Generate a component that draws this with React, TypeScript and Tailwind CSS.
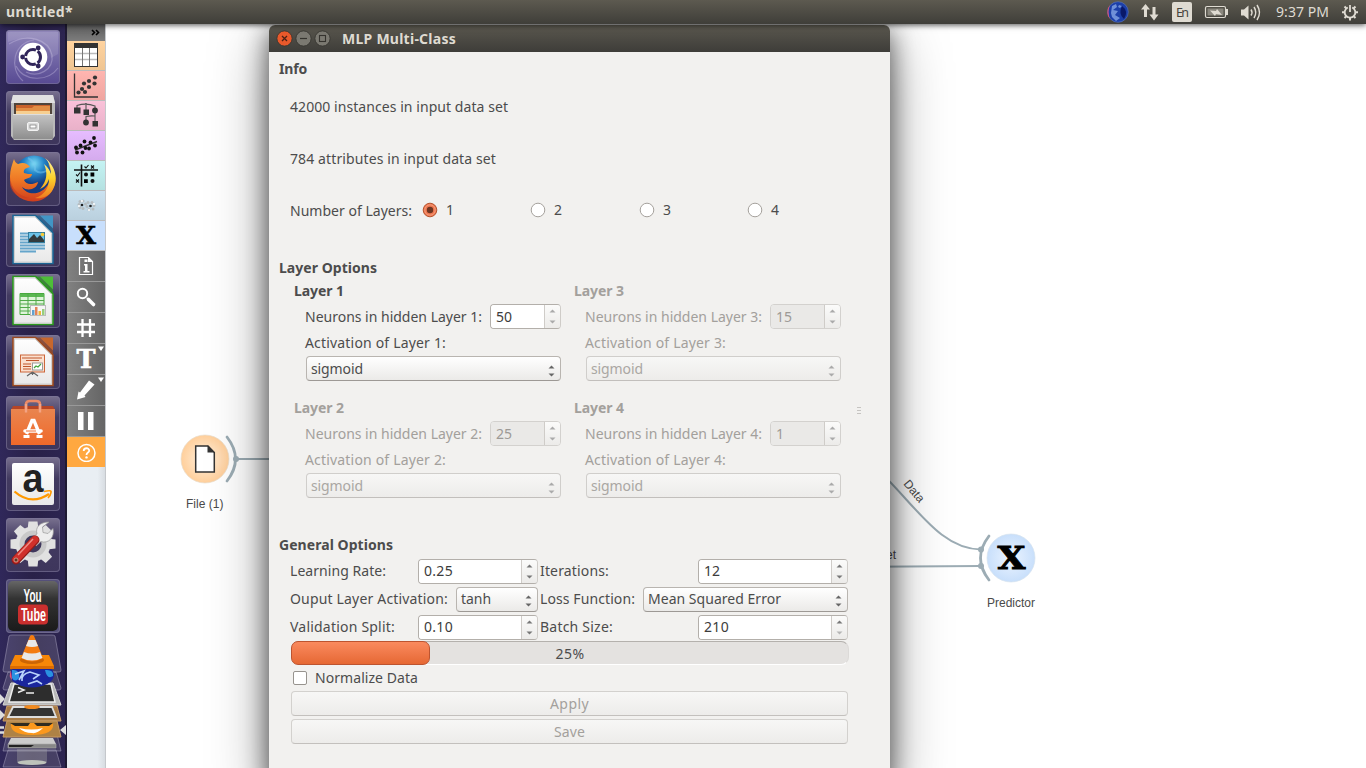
import { useLayoutEffect, useRef, useState } from "react";
import type { ReactNode } from "react";

/* Text set to a given measure by adjusting its tracking. */
function T({ w, children, className = "" }: { w: number; children: string; className?: string }) {
  const ref = useRef<HTMLSpanElement>(null);
  const [gap, setGap] = useState(0);
  useLayoutEffect(() => {
    const el = ref.current;
    if (!el) return;
    const prev = el.style.letterSpacing;
    el.style.letterSpacing = "0px";
    const natural = el.getBoundingClientRect().width;
    el.style.letterSpacing = prev;
    setGap((w - natural) / children.length);
  }, [w, children]);
  return (
    <span ref={ref} style={{ letterSpacing: `${gap}px` }} className={`inline-block shrink-0 whitespace-pre ${className}`}>
      {children}
    </span>
  );
}

/* ---------- form controls ---------- */

function Arrows({ up, down, gap }: { up: string; down: string; gap: number }) {
  return (
    <svg width="7" height={8 + gap} viewBox={`0 0 7 ${8 + gap}`}>
      <path d="M0.5 3.5L3.5 0.5L6.5 3.5Z" fill={up} />
      <path d={`M0.5 ${gap + 4.5}L3.5 ${gap + 7.5}L6.5 ${gap + 4.5}Z`} fill={down} />
    </svg>
  );
}

function Spin({ value, tw, disabled, up = "#777", down = "#777", className }: { value: string; tw: number; disabled?: boolean; up?: string; down?: string; className: string }) {
  return (
    <div className={`flex h-[25px] shrink-0 overflow-hidden rounded-[4px] border ${disabled ? "border-[#d3d1ce] text-[#9d9a96]" : "border-[#b3afaa] border-r-[#cfccc8] text-[#3c3c3c]"} ${className}`}>
      <div className={`flex flex-1 items-center pl-[5px] ${disabled ? "bg-[#eae9e7]" : "bg-white"}`}>
        <T w={tw}>{value}</T>
      </div>
      <div className="flex w-[16px] items-center justify-center border-l border-[#cfccc8] bg-linear-to-b from-[#fbfbfa] to-[#ecebe9]">
        <Arrows up={disabled ? "#aaa" : up} down={disabled ? "#aaa" : down} gap={7} />
      </div>
    </div>
  );
}

function Combo({ value, tw, disabled, className }: { value: string; tw: number; disabled?: boolean; className: string }) {
  return (
    <div className={`flex h-[25px] shrink-0 items-center justify-between rounded-[4px] border bg-linear-to-b pr-[5px] pl-[4px] ${disabled ? "border-[#d0cecb] border-b-[#c2bfbc] from-[#f7f7f6] to-[#edecea] text-[#aaa7a3]" : "border-[#b9b5b0] border-b-[#9d9995] from-white to-[#ebeae8] text-[#4c4c4c]"} ${className}`}>
      <T w={tw}>{value}</T>
      <div className="pt-[4px]">
        <Arrows up={disabled ? "#aaa" : "#666"} down={disabled ? "#aaa" : "#666"} gap={4} />
      </div>
    </div>
  );
}

function Layer({ n, value, tw, disabled }: { n: number; value: string; tw: number; disabled?: boolean }) {
  return (
    <div className={`flex w-[267px] flex-col ${disabled ? "text-[#a3a09c]" : "text-[#4c4c4c]"}`}>
      <div className="flex h-[22px] items-center font-bold">
        <T w={50}>{`Layer ${n}`}</T>
      </div>
      <div className="mt-[2px] flex h-[26px] items-start justify-between pl-[11px]">
        <div className="flex h-[26px] items-center">
          <T w={177}>{`Neurons in hidden Layer ${n}:`}</T>
        </div>
        <Spin className="w-[71px]" value={value} tw={tw} disabled={disabled} up="#aaa" down="#aaa" />
      </div>
      <div className="flex h-[26px] items-center pl-[11px]">
        <T w={141}>{`Activation of Layer ${n}:`}</T>
      </div>
      <Combo className="ml-[12px] w-[255px]" value="sigmoid" tw={52} disabled={disabled} />
    </div>
  );
}

function Radio({ label, on, className = "" }: { label: string; on?: boolean; className?: string }) {
  return (
    <div className={`flex items-center gap-[8px] ${className}`}>
      <svg width="16" height="16" viewBox="0 0 16 16">
        <circle cx="8" cy="8" r="6.800" fill={on ? "#ee7750" : "#fff"} stroke={on ? "#b4542f" : "#a5a19c"} />
        {on && <circle cx="8" cy="8" r="5.2" fill="none" stroke="#f59a78" />}
        {on && <circle cx="8" cy="8" r="3.2" fill="#6d3521" />}
      </svg>
      <T w={8}>{label}</T>
    </div>
  );
}

function PushButton({ label, tw }: { label: string; tw: number }) {
  return (
    <div className="flex h-[25px] w-[557px] items-center justify-center rounded-[4px] border border-[#d3d1ce] border-b-[#c3c0bd] bg-linear-to-b from-[#f7f7f6] to-[#edecea] text-[#a3a09c]">
      <T w={tw}>{label}</T>
    </div>
  );
}

/* ---------- dialog ---------- */

function Dialog() {
  return (
    <div className="absolute top-[25px] left-[269px] flex h-[760px] w-[621px] flex-col rounded-t-[6px] bg-[#f2f1ef] text-[#4c4c4c] shadow-[0_16px_60px_rgba(0,0,0,0.4),0_6px_26px_rgba(0,0,0,0.6)]">
      <div className="flex h-[27px] items-center rounded-t-[6px] bg-linear-to-b from-[#5b584f] to-[#3e3d39] pl-[7px]">
        <svg width="56" height="18" viewBox="0 0 56 18">
          <circle cx="8.5" cy="8.500" r="7.6" fill="#e9592b" stroke="#35332e" strokeWidth=".8" />
          <path d="M6 6l5 5M11 6l-5 5" stroke="#4b2114" strokeWidth="1.3" />
          <circle cx="27.5" cy="8.500" r="7.6" fill="#7b7971" stroke="#35332e" strokeWidth=".8" />
          <path d="M24 8.500h7" stroke="#35332e" strokeWidth="1.2" />
          <circle cx="46.5" cy="8.500" r="7.6" fill="#7b7971" stroke="#35332e" strokeWidth=".8" />
          <rect x="43.500" y="5.500" width="6" height="6" fill="none" stroke="#35332e" strokeWidth="1.1" />
        </svg>
        <T w={114} className="ml-[10px] font-bold text-[#dfdbd2]">MLP Multi-Class</T>
      </div>
      <div className="flex flex-col pt-[5px] pl-[10px]">
        <div className="flex h-[24px] items-center font-bold"><T w={28}>Info</T></div>
        <div className="mt-[14px] flex h-[24px] items-center pl-[11px]"><T w={218}>42000 instances in input data set</T></div>
        <div className="mt-[28px] flex h-[24px] items-center pl-[11px]"><T w={206}>784 attributes in input data set</T></div>
        <div className="mt-[27px] flex h-[24px] items-center pl-[11px]">
          <T w={122} className="relative top-px">Number of Layers:</T>
          <Radio label="1" on className="ml-[10px] w-[108px]" />
          <Radio label="2" className="w-[109px]" />
          <Radio label="3" className="w-[108px]" />
          <Radio label="4" />
        </div>
        <div className="mt-[34px] flex h-[24px] items-center font-bold"><T w={98}>Layer Options</T></div>
        <div className="flex items-center">
          <div className="grid w-[560px] grid-cols-[280px_267px] gap-y-[16px] pl-[15px]">
            <Layer n={1} value="50" tw={16} />
            <Layer n={3} value="15" tw={16} disabled />
            <Layer n={2} value="25" tw={16} disabled />
            <Layer n={4} value="1" tw={8} disabled />
          </div>
          <div className="mt-[43px] ml-[18px] flex flex-col gap-[2px]">
            <div className="h-px w-[4px] bg-[#c6c4c1]" />
            <div className="h-px w-[4px] bg-[#c6c4c1]" />
            <div className="h-px w-[4px] bg-[#c6c4c1]" />
          </div>
        </div>
        <div className="mt-[35px] flex h-[24px] items-center font-bold"><T w={114}>General Options</T></div>
        <div className="flex h-[28px] items-center pl-[11px]">
          <div className="w-[128px]"><T w={96}>Learning Rate:</T></div>
          <Spin className="w-[120px]" value="0.25" tw={29} />
          <div className="ml-[2px] w-[158px]"><T w={69}>Iterations:</T></div>
          <Spin className="w-[150px]" value="12" tw={16} />
        </div>
        <div className="flex h-[28px] items-center pl-[11px]">
          <div className="w-[166px]"><T w={158}>Ouput Layer Activation:</T></div>
          <Combo className="w-[82px]" value="tanh" tw={30} />
          <div className="ml-[2px] w-[103px]"><T w={95}>Loss Function:</T></div>
          <Combo className="w-[205px]" value="Mean Squared Error" tw={133} />
        </div>
        <div className="flex h-[28px] items-center pl-[11px]">
          <div className="w-[128px]"><T w={105}>Validation Split:</T></div>
          <Spin className="w-[120px]" value="0.10" tw={29} />
          <div className="ml-[2px] w-[158px]"><T w={73}>Batch Size:</T></div>
          <Spin className="w-[150px]" value="210" tw={25} down="#b5b5b5" />
        </div>
        <div className="relative ml-[12px] flex h-[24px] w-[558px] items-center justify-center rounded-[8px] border border-[#dcdad8] border-t-[#b4b1ad] border-b-white bg-[#e4e2e0] pt-[2px]">
          <div className="absolute -top-px -left-px h-[24px] w-[139px] rounded-[7px] border border-[#bd5430] bg-linear-to-b from-[#fa8a5e] to-[#e66833]" />
          <T w={29}>25%</T>
        </div>
        <div className="flex h-[26px] items-center pl-[14px]">
          <div className="h-[14px] w-[14px] rounded-[2px] border border-[#97938e] bg-white" />
          <T w={103} className="ml-[8px]">Normalize Data</T>
        </div>
        <div className="flex flex-col gap-[3px] pl-[12px]">
          <PushButton label="Apply" tw={39} />
          <PushButton label="Save" tw={31} />
        </div>
      </div>
    </div>
  );
}

/* ---------- canvas ---------- */

function Canvas() {
  return (
    <div className="relative flex-1 overflow-hidden bg-white">
      <svg className="absolute inset-0" width="1260" height="744" viewBox="106 24 1260 744">
        <defs>
          <radialGradient id="file"><stop offset="0" stopColor="#fff1e0" /><stop offset="1" stopColor="#ffcf9b" /></radialGradient>
          <radialGradient id="pred"><stop offset="0" stopColor="#ecf4ff" /><stop offset="1" stopColor="#c8dffb" /></radialGradient>
        </defs>
        <g fill="none" stroke="#9cacb4" strokeWidth="2">
          <path d="M236 459H300" />
          <path d="M870 462C915 503 938 549 981 549.500" />
          <path d="M870 566.800L981 566" />
          <path d="M227 437Q244 459 227 481" strokeWidth="2.800" strokeLinecap="round" />
          <path d="M989 536Q972 558 989 580" strokeWidth="2.800" strokeLinecap="round" />
        </g>
        <circle cx="236" cy="459" r="3" fill="#9cacb4" />
        <circle cx="981" cy="549.500" r="3" fill="#9cacb4" />
        <circle cx="981" cy="566" r="3" fill="#9cacb4" />
        <circle cx="205" cy="459" r="24" fill="url(#file)" stroke="#e8dccd" strokeWidth=".7" />
        <path d="M195.700 446H208L214.300 452.500V472H195.700Z" fill="#fff" stroke="#333" strokeWidth="1.500" />
        <path d="M207.500 445.500V452.500H215Z" fill="#333" />
        <circle cx="1011" cy="558" r="24" fill="url(#pred)" stroke="#d6e2ee" strokeWidth=".7" />
        <text x="1011.500" y="568.700" textAnchor="middle" fontFamily="DejaVu Serif" fontWeight="bold" fontSize="32" stroke="#000" strokeWidth=".9" textLength="28" lengthAdjust="spacingAndGlyphs">X</text>
        <g fontFamily="Liberation Sans" fontSize="12" fill="#4a4a4a">
          <text x="186" y="508" textLength="37.500">File (1)</text>
          <text x="987" y="607" textLength="48">Predictor</text>
          <text x="886" y="559">et</text>
          <text transform="translate(903 484) rotate(50)">Data</text>
        </g>
      </svg>
    </div>
  );
}

/* ---------- widget toolbar ---------- */

function Tool({ bg, children }: { bg: string; children: ReactNode }) {
  return (
    <div className={`flex h-[30px] items-center justify-center border-b border-[#bbb] ${bg}`}>
      <svg width="28" height="28" viewBox="0 0 28 28">{children}</svg>
    </div>
  );
}

function DarkTool({ children, menu }: { children: ReactNode; menu?: boolean }) {
  return (
    <div className="flex h-[31px] items-center justify-center border-b border-[#999] bg-linear-to-r from-[#818181] to-[#656565]">
      <svg width="38" height="30" viewBox="0 0 38 30">
        {children}
        {menu && <path d="M31 2.500h6l-3 4.500z" fill="#fff" />}
      </svg>
    </div>
  );
}

function dots(points: number[][], r: number, fill = "#333") {
  return points.map(([x, y]) => <circle key={`${x}-${y}`} cx={x} cy={y} r={r} fill={fill} />);
}

function Toolbar() {
  return (
    <div className="flex w-[39px] flex-col border-r border-[#c5c8cc] bg-linear-to-r from-[#e9eef3] from-80% to-[#d8dde2]">
      <div className="flex h-[17px] items-center justify-end bg-linear-to-b from-[#5c5c5c] to-[#7d7d7d] pr-[5px]">
        <svg width="9" height="7" viewBox="0 0 9 7"><path d="M1 1l2.500 2.500L1 6M5 1l2.500 2.500L5 6" fill="none" stroke="#000" strokeWidth="1.600" /></svg>
      </div>
      <Tool bg="bg-linear-to-b from-[#ffd39f] to-[#efc592]">
        <rect x="2.500" y="1.500" width="23" height="23" fill="#fff" stroke="#333" />
        <rect x="2" y="1" width="24" height="5" fill="#333" />
        <path d="M3 11.500h22M3 17.500h22" stroke="#bbb" strokeWidth="1.500" /><path d="M10.500 6v18M17.500 6v18" stroke="#777" />
      </Tool>
      <Tool bg="bg-linear-to-b from-[#ffb5b0] to-[#efa5a0]">
        <path d="M2.500 1.500V25H26" fill="none" stroke="#333" strokeWidth="1.300" />
        {dots([[6.500, 20.500], [10, 17], [13, 20], [12, 11.500], [17, 15], [17, 9], [22.500, 11.500], [23, 5.500]], 2.100)}
      </Tool>
      <Tool bg="bg-linear-to-b from-[#fac1d9] to-[#e9b1c9]">
        <path d="M5 8V3.500Q14 0.500 23 4V8M14 1V8M14 19V14.500Q18 13.500 23 14M23 10v10" fill="none" stroke="#555" strokeWidth="1.100" />
        <path d="M2 5.500h6.500v6H2zM11.500 7.500h5.500v5.500h-5.500zM20.500 19h5.500v5.500h-5.500z" fill="#333" />
        {dots([[23, 8.500], [14, 20.500]], 2.900)}
      </Tool>
      <Tool bg="bg-linear-to-b from-[#e6bcff] to-[#d5abee]">
        <path d="M3 18L25 9.500" stroke="#333" strokeWidth="1.600" />
        {dots([[4, 15.500], [5, 20.500], [8.500, 13.500], [10.500, 20.500], [12.500, 9.500], [13.500, 16], [17, 16.500], [18.500, 10.500], [22, 6], [23, 13.500]], 1.900, "#111")}
      </Tool>
      <Tool bg="bg-linear-to-b from-[#c4f3f3] to-[#b5e1e1]">
        <path d="M2 8h24M9.500 2.500v22" stroke="#111" strokeWidth="1.600" />
        <path d="M12.500 4.500l1.500 1.500L16.500 3M4 12.500l1.500 1.500L8 10.500M19 3.500l3 3m0-3l-3 3M4 17.500l3 3m0-3l-3 3" fill="none" stroke="#111" strokeWidth="1.100" />
        {dots([[14, 12.500], [20.500, 19]], 2, "#111")}
        <path d="M18.500 10.600h3.800v3.800h-3.800zM12 17.200h3.800V21H12z" />
      </Tool>
      <Tool bg="bg-linear-to-b from-[#cbe2f0] to-[#bad0de]">
        {dots([[8, 9.500], [11, 9], [7, 12.500], [8, 15.500], [11, 16.500], [13.500, 12], [16, 10.500], [20, 10.500], [22, 13.500], [21, 17], [17, 17.500], [15, 14.500]], 1.500, "#b5bcc0")}
        {dots([[10, 13], [18.500, 14]], 1.300, "#222")}
        {dots([[10, 9], [7, 14], [17, 18], [22, 12]], 1, "#fff")}
      </Tool>
      <Tool bg="bg-[#c8dffc]">
        <text x="14" y="22" textAnchor="middle" fontFamily="DejaVu Serif" fontWeight="bold" fontSize="24" stroke="#000" strokeWidth=".6" textLength="20" lengthAdjust="spacingAndGlyphs">X</text>
      </Tool>
      <DarkTool>
        <path d="M12.500 6.500h9l4 4v13h-13z" fill="none" stroke="#fff" strokeWidth="1.200" /><path d="M21 6v5h5z" fill="#fff" />
        <path d="M17 13h3.500v7h2v1.500h-6v-1.500h1.500v-5.500H17zM17.500 8.500h3v2.500h-3z" fill="#fff" />
      </DarkTool>
      <DarkTool>
        <circle cx="15.500" cy="11.500" r="4.700" fill="none" stroke="#fff" strokeWidth="2" /><path d="M20 16l1.500 1.500" stroke="#fff" strokeWidth="1.500" /><path d="M21.500 17.500l5 5" stroke="#fff" strokeWidth="3.600" strokeLinecap="round" />
      </DarkTool>
      <DarkTool>
        <path d="M15.500 6v18M23 6v18M10 11.500h18M10 19h18" stroke="#fff" strokeWidth="2.300" />
      </DarkTool>
      <DarkTool menu>
        <text x="19" y="24.300" textAnchor="middle" fill="#fff" fontFamily="DejaVu Serif" fontWeight="bold" fontSize="25.500" stroke="#fff" strokeWidth=".6" textLength="19" lengthAdjust="spacingAndGlyphs">T</text>
      </DarkTool>
      <DarkTool menu>
        <path d="M22 5.500l5.500 4L17.500 20.500l1 1.500-8.500 2.500 1.500-8 1.500 1z" fill="#fff" />
      </DarkTool>
      <DarkTool>
        <path d="M11 6h5.500v18H11zM21 6h5.500v18H21z" fill="#fff" />
      </DarkTool>
      <div className="flex h-[30px] items-center justify-center bg-[#ffa840]">
        <svg width="20" height="20" viewBox="0 0 20 20">
          <circle cx="10.500" cy="11" r="8.500" fill="none" stroke="#fff" strokeWidth="1.500" />
          <path d="M7.700 9C7.700 5.400 13.300 5.400 13.200 8.700C13.200 10.700 10.500 10.400 10.500 12.900" fill="none" stroke="#fff" strokeWidth="1.800" />
          <circle cx="10.500" cy="15.400" r="1.200" fill="#fff" />
        </svg>
      </div>
    </div>
  );
}

/* ---------- launcher ---------- */

function Tile({ children, bg = "bg-linear-to-b from-[#79718f] via-[#423a60] via-40% to-[#3e365c]" }: { children: ReactNode; bg?: string }) {
  return (
    <div className={`h-[54px] w-[54px] shrink-0 rounded-[4px] ring-1 ring-[#7d769a]/60 ring-inset ${bg}`}>
      <svg className="overflow-visible" width="54" height="54" viewBox="0 0 54 54">{children}</svg>
    </div>
  );
}

function OfficeDoc({ edge, fold, children }: { edge: string; fold: string; children: ReactNode }) {
  return (
    <Tile>
      <path d="M7 2.500H29.500L47 20V50.500H7Z" fill="url(#paper)" stroke={edge} strokeWidth="1.600" />
      <path d="M8.500 4H29L45.500 20.500V49H8.500Z" fill="none" stroke="#cfcfcf" />
      <path d="M29.500 2.500L47 20V15.500L34 2.500Z" fill={edge} opacity=".7" />
      <path d="M34 2.500H47V15.500Z" fill={fold} />
      {children}
    </Tile>
  );
}

const TEETH = [0, 45, 90, 135, 180, 225, 270, 315];

function Launcher() {
  return (
    <div className="flex w-[67px] flex-col items-center gap-[7px] border-r-2 border-[#1f1a33] bg-linear-to-r from-[#30285a] via-[#292148] to-[#2d2551] pt-[6px]">
      <svg className="absolute" width="0" height="0">
        <defs>
          <linearGradient id="paper" x1="0" y1="0" x2="0" y2="1"><stop offset="0" stopColor="#fff" /><stop offset="1" stopColor="#e8e8e8" /></linearGradient>
          <linearGradient id="metal" x1="0" y1="0" x2="0" y2="1"><stop offset="0" stopColor="#c4c4c4" /><stop offset="1" stopColor="#8e8e8e" /></linearGradient>
          <linearGradient id="bag" x1="0" y1="0" x2="0" y2="1"><stop offset="0" stopColor="#e9854f" /><stop offset="1" stopColor="#f0692a" /></linearGradient>
          <radialGradient id="globe" cx=".5" cy=".2"><stop offset="0" stopColor="#7ddcf5" /><stop offset=".5" stopColor="#2384c8" /><stop offset="1" stopColor="#143b80" /></radialGradient>
          <linearGradient id="fox" x1="0" y1="0" x2="0" y2="1"><stop offset="0" stopColor="#f7a33a" /><stop offset=".5" stopColor="#ee7624" /><stop offset="1" stopColor="#cf3d1d" /></linearGradient>
          <linearGradient id="tail" x1="0" y1="0" x2="0" y2="1"><stop offset="0" stopColor="#fff2a0" /><stop offset=".5" stopColor="#fcd12b" /><stop offset="1" stopColor="#ef7a20" /></linearGradient>
          <linearGradient id="yt" x1="0" y1="0" x2="0" y2="1"><stop offset="0" stopColor="#666" /><stop offset=".35" stopColor="#333" /><stop offset="1" stopColor="#1b1b1b" /></linearGradient>
        </defs>
      </svg>
      <Tile bg="bg-linear-to-b from-[#9288bb] to-[#584a93]">
        <g fill="none" stroke="#c5bce2" strokeOpacity=".4" strokeWidth="1.200">
          <path d="M3 14C22 2 43 10 46 25C48 40 32 48 20 42" /><path d="M17 51C2 38 8 12 28 10" /><path d="M52 38C42 52 18 52 10 36" />
        </g>
        <path d="M2 12C24 4 44 12 45 28L52 24V2H2Z" fill="#fff" opacity=".12" />
        <circle cx="27" cy="27" r="14.300" fill="#fff" />
        <circle cx="27" cy="27" r="7.500" fill="none" stroke="#30255a" strokeWidth="3" strokeDasharray="13.700 2" strokeDashoffset="-8.800" />
        {dots([[16.600, 27], [32.200, 18], [32.200, 36]], 2.400, "#30255a")}
      </Tile>
      <Tile>
        <path d="M7 4H47L49 12V45L46 49H8L5 45V12Z" fill="#b9b9b9" />
        <path d="M7 4H47L49 12H5Z" fill="#e2e2e2" />
        <path d="M8 12H46V24H8Z" fill="#50453c" />
        <path d="M10 14H44V24H10Z" fill="#c9622b" /><path d="M10 17H26L28 15H44V24H10Z" fill="#e28e45" /><path d="M10 20H44V24H10Z" fill="#f6cf91" />
        <path d="M7 23H47V48H7Z" fill="url(#metal)" /><path d="M7 23.500H47" stroke="#dedede" />
        <rect x="21.500" y="31.500" width="11" height="8" rx="1.500" fill="#ddd" stroke="#f3f3f3" /><rect x="24" y="34" width="6" height="3" fill="#fff" stroke="#777" strokeWidth=".7" />
      </Tile>
      <Tile>
        <circle cx="28" cy="24" r="20.500" fill="url(#globe)" />
        <path d="M22 6Q30 10 29 18Q34 23 42 18" fill="none" stroke="#75c6ee" strokeWidth="2" opacity=".5" />
        <path d="M8 7C9 10 10 11 12 12C17 10 21 11 24 15C19 16 17 18 18 21C21 22 23 22 26 22C26 26 21 26 18 28C20 33 26 33 32 30C31 37 22 40 16 35C21 44 36 44 43 31C46 26 46 18 42 12C49 17 52 28 47 37C42 47 32 51 22 49C9 46 3 35 4 24C4 18 6 13 8 7Z" fill="url(#fox)" />
        <path d="M39 6C50 14 53 29 46 39C42 45 35 47 29 46C39 43 43 35 43 27C41 33 37 36 34 37C41 29 42 21 38 12C42 15 44 19 45 22C45 16 43 10 39 6Z" fill="url(#tail)" />
        <path d="M4 25C5 37 13 44 23 46C14 47 6 42 4 34Z" fill="#c53a1f" opacity=".5" />
      </Tile>
      <OfficeDoc edge="#1c6694" fold="#4195c5">
        <path d="M14 20.500H39M14 23.500H39M14 26.500H39M14 29.500H39M14 32.500H39M14 35.500H39M14 38.500H30" stroke="#65a5cb" strokeWidth="1.900" />
        <rect x="22.500" y="19.500" width="16" height="10" fill="#6cc3e9" stroke="#347d9d" />
        <path d="M23 29V26L28 21L31 25L34 22L38 27V29Z" fill="#333b3d" /><circle cx="36.500" cy="21.500" r="1.800" fill="#f8c932" />
      </OfficeDoc>
      <OfficeDoc edge="#2c991e" fold="#4dbe37">
        <path d="M14 19.500H38V40.500H14Z" fill="#dff4da" stroke="#48a83e" />
        <path d="M14 20H38V23H14Z" fill="#5ab751" />
        <path d="M14 26.500H38M14 30H38M14 33.500H38M14 37H38M22 20V40M30 20V40" stroke="#51a94a" strokeWidth="1" />
        <rect x="24.500" y="31.500" width="15" height="10" fill="#f6f6f6" stroke="#bbb" />
        <path d="M26 36h2.500v5H26z" fill="#62a1cf" /><path d="M29 33h2.500v8H29z" fill="#e28358" /><path d="M32.500 37h2.500v4h-2.500z" fill="#edb83d" /><path d="M36 35h2.500v6H36z" fill="#97ce7d" />
      </OfficeDoc>
      <OfficeDoc edge="#9c4a20" fold="#c6672d">
        <rect x="14.500" y="20" width="24" height="17" fill="#fbe0cf" stroke="#cc673b" />
        <path d="M16 23H36M20 25.500H33M17 29H25M17 31.500H25M17 34H25" stroke="#bf562c" strokeWidth="1.200" />
        <rect x="26.500" y="28" width="10" height="7" fill="#fff" stroke="#999" /><path d="M28 33l2-2 2 1 3-3" fill="none" stroke="#41a53b" strokeWidth="1.200" />
        <path d="M26.500 37L21 41M26.500 37L32 41M26.500 37V40" stroke="#666" strokeWidth="1.200" />
      </OfficeDoc>
      <Tile>
        <path d="M7 10H47L49 14H5Z" fill="#b54526" />
        <path d="M20 17V8Q20 5 24 5H30Q34 5 34 8V17" fill="none" stroke="#ec8a65" strokeWidth="2.600" />
        <path d="M5 13H49V49H5Z" fill="url(#bag)" />
        <path d="M20 16.500V8M34 16.500V8" stroke="#f4a383" strokeWidth="2.400" />
        <path d="M20.500 38L26 24.500H28L33.500 38" fill="none" stroke="#fff" strokeWidth="3.400" /><path d="M19 35H35" stroke="#fff" strokeWidth="3.600" strokeLinecap="round" /><path d="M20 35H30" stroke="#ee6d32" strokeWidth="1" /><path d="M17.500 40.500h6M30.500 40.500h6" stroke="#fff" strokeWidth="3" />
      </Tile>
      <Tile>
        <rect x="6" y="6" width="42" height="42" rx="2" fill="url(#paper)" />
        <text x="27" y="34.500" textAnchor="middle" fontFamily="Liberation Sans" fontWeight="bold" fontSize="40" fill="#222" textLength="21" lengthAdjust="spacingAndGlyphs">a</text>
        <path d="M8.500 34.500Q25 49 43 37" fill="none" stroke="#ff9900" strokeWidth="2.300" /><path d="M38 34.500Q46 32.500 45 35.500Q44.500 38.500 42 41" fill="none" stroke="#ff9900" strokeWidth="1.600" />
      </Tile>
      <Tile>
        <g transform="translate(27 26)">
          {TEETH.map((a) => <path key={a} d="M-5.500-14L-4.500-22.500H4.500L5.500-14Z" fill="#e1e1e1" transform={`rotate(${a})`} />)}
          <circle r="17.500" fill="#e1e1e1" /><circle r="13.500" fill="#c9c9c9" /><circle r="8.500" fill="#3f375c" />
        </g>
        <path d="M24 21L31 16C29 9 34 4 43 4L36.500 9L37 14.500L42 15.500L47 10.500C49 20 42 26 35 23.500L30 28Z" fill="#eee" stroke="#999" strokeWidth=".7" />
        <path d="M29 22L10 42" stroke="#8e1c1a" strokeWidth="9" strokeLinecap="round" /><path d="M29 21.500L10 41.500" stroke="#d0302b" strokeWidth="7" strokeLinecap="round" /><path d="M27 21L12 37" stroke="#ee8c84" strokeWidth="1.500" />
        <circle cx="10" cy="42" r="2" fill="#632" stroke="#dba" strokeWidth=".7" />
      </Tile>
      <Tile bg="bg-[#55507a]">
        <rect x="2" y="2" width="50" height="50" rx="5" fill="url(#yt)" />
        <rect x="12" y="25.500" width="30" height="20" rx="4" fill="#c92f2e" />
        <g fontFamily="Liberation Sans" fontWeight="bold" fill="#fff" textAnchor="middle">
          <text x="26.500" y="23" fontSize="18" textLength="18" lengthAdjust="spacingAndGlyphs">You</text>
          <text x="27.500" y="41.500" fontSize="18" textLength="25" lengthAdjust="spacingAndGlyphs">Tube</text>
        </g>
      </Tile>
      <svg className="-mt-[7px] shrink-0" width="67" height="135" viewBox="0 633 67 135">
        <g fill="#fff" fillOpacity=".13" stroke="#a9a3c0" strokeOpacity=".5">
          <path d="M10 636Q11 635 13 635H53Q55 635 56 636L62 670Q62 672 60 672H6Q4 672 4 670Z" />
          <path d="M9 672H57L62 688Q62 690 60 690H6Q4 690 4 688Z" />
          <path d="M8 734H58L62 751H4Z" /><path d="M9 750H57L62 767H4Z" />
        </g>
        <path d="M12 683H54L62 705H4Z" fill="#b8b8b8" stroke="#d5d5d5" /><path d="M15 684H52L56 702H10Z" fill="#2d2d2d" stroke="#eee" strokeWidth="1.500" />
        <ellipse cx="33" cy="675" rx="22" ry="12.500" fill="#1a269d" />
        <path d="M13 670Q21 669 20 678Q16 683 13 678ZM46 670Q55 669 54 676Q48 680 46 670Z" fill="#2a91e1" /><path d="M12 671Q9 676 13 680Z" fill="#ec5671" />
        <path d="M16 674L25 671L20 680M23 681Q22 674 31 672L40 675L34 679M29 684L38 681L43 684" fill="none" stroke="#b8d2fa" strokeWidth="1.600" />
        <path d="M19 687.500L25 690L19 692.500M27 693H35" fill="none" stroke="#eee" strokeWidth="1.500" />
        <path d="M8 706H58L62 721H4Z" fill="#a87b46" stroke="#c99b63" /><path d="M14 707H53L57 717H9Z" fill="#333" stroke="#ddd" strokeWidth="1.800" /><ellipse cx="33" cy="707" rx="8" ry="2" fill="#f08a20" />
        <path d="M8 721H58L62 737H4Z" fill="#ae8245" stroke="#c99b63" /><path d="M12 723H54Q56 735 33 735Q10 735 12 723Z" fill="#fb981d" />
        <path d="M11 723H31L29 726H16ZM35 723H54L50 726H38Z" fill="#302b20" /><path d="M20 728Q33 731 44 728Q38 734 33 733Q25 733 20 728Z" fill="#fff" />
        <path d="M12 738H54L57 744H9Z" fill="#ccc" /><path d="M9 744H57V748H9Z" fill="#888" stroke="#aaa" strokeWidth=".6" /><path d="M10 745h25l-3 2H10z" fill="#222" />
        <path d="M18 749H48V762Q33 766 18 762Z" fill="#aaa" opacity=".35" /><ellipse cx="33" cy="762.500" rx="14.500" ry="2.500" fill="#bec3bb" />
        <path d="M16 655H50L55 666V669H11V666Z" fill="#f78707" /><path d="M11 666H55V669H11Z" fill="#d96b02" />
        <ellipse cx="33" cy="660" rx="12" ry="4" fill="#cb6505" />
        <path d="M31 636Q33 634 35 636L44 658Q33 665 22 658Z" fill="#f47c10" />
        <path d="M29.500 640H36.500L39 646Q33 648 27 646ZM25 652Q33 655 41 652L43.500 658Q33 663 22.500 658Z" fill="#e8e8e8" />
        <path d="M1 694L6 699L1 704ZM1 710L6 715L1 720ZM67 725L61 730L67 735Z" fill="#ddd" /><path d="M1 727.500H5M1 732.500H5" stroke="#ddd" strokeWidth="2.500" />
      </svg>
    </div>
  );
}

/* ---------- top panel ---------- */

function Panel() {
  return (
    <div className="relative z-10 flex h-[24px] shrink-0 items-center justify-between bg-linear-to-b from-[#5d5a50] to-[#3f3e39] pl-[6px] text-[#dfdbd2] shadow-[0_1px_6px_rgba(0,0,0,0.7)]">
      <T w={67} className="font-bold">untitled*</T>
      <svg width="286" height="24" viewBox="1080 0 286 24">
        <circle cx="1118" cy="12" r="10.300" fill="#1c3fa8" stroke="#5a77c4" strokeWidth=".6" />
        <path d="M1110 5Q1107 12 1110 19L1108 16Q1106 10 1110 5Z" fill="#e45176" />
        <path d="M1112 6l4-2 1 3-4 3 5 1-3 4 5 3-4 3-4-4-1-4zM1119 5l3 1-2 2-2-1z" fill="#9dbcf1" opacity=".65" /><path d="M1122 6q7 5 2 13-6-5-2-13z" fill="#0a1969" />
        <g fill="#dfdbd2">
          <path d="M1141 9.500l4.500-5.500 4.500 5.500h-3v7.500h-3v-7.500zM1149.500 14.500h3v-7.500h3v7.500h3l-4.500 6-4.500-6z" />
          <rect x="1172" y="2" width="20" height="20" rx="2" />
          <text x="1182.500" y="17" textAnchor="middle" fontFamily="Noto Sans" fontSize="12.500" textLength="13" fill="#45433d">En</text>
          <rect x="1205.500" y="6.500" width="20" height="11" rx="1.500" fill="none" stroke="#dfdbd2" strokeWidth="1.200" />
          <rect x="1207.500" y="8.500" width="16" height="7" fill="#8a877e" /><path d="M1226 9h2v6h-2z" />
          <path d="M1210 10.500l6 .5 1-2 5 6-6-1-1 2z" />
          <path d="M1241 9.500h3l4.500-4v14l-4.500-4h-3z" />
        </g>
        <g fill="none" stroke="#dfdbd2" strokeWidth="1.500">
          <path d="M1251 9.500q2 3 0 6M1254 7q3.500 5.500 0 11M1257 5q5 7.500 0 15" />
          <path d="M1347.800 7.500A5.300 5.300 0 1 0 1352.200 7.500M1350 5v7" strokeWidth="1.800" />
          <path d="M1342 12.200h3M1355 12.200h3M1344.500 6.500l2 2M1355.500 6.500l-2 2M1344.500 18l2-2M1355.500 18l-2-2M1350 17v3.500" strokeWidth="2" />
        </g>
        <text x="1276" y="17.300" fontFamily="Noto Sans" fontSize="14" fill="#dfdbd2" textLength="53">9:37 PM</text>
      </svg>
    </div>
  );
}

export default function App() {
  return (
    <div className="relative flex h-[768px] w-[1366px] flex-col overflow-hidden bg-white font-['Noto_Sans',sans-serif] text-[14px] leading-[20px]">
      <Panel />
      <div className="flex h-[744px]">
        <Launcher />
        <Toolbar />
        <Canvas />
      </div>
      <Dialog />
    </div>
  );
}
